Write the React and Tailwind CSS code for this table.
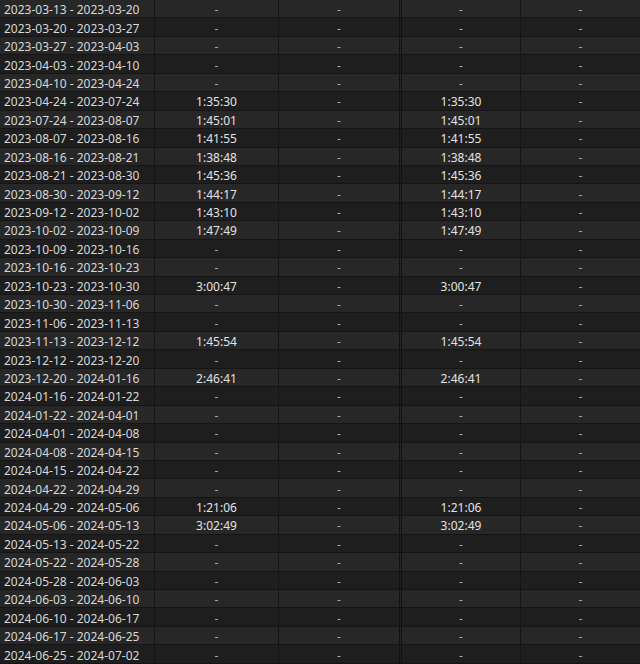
import React from 'react'

const rows = [
  ['2023-03-13 - 2023-03-20'],
  ['2023-03-20 - 2023-03-27'],
  ['2023-03-27 - 2023-04-03'],
  ['2023-04-03 - 2023-04-10'],
  ['2023-04-10 - 2023-04-24'],
  ['2023-04-24 - 2023-07-24', '1:35:30'],
  ['2023-07-24 - 2023-08-07', '1:45:01'],
  ['2023-08-07 - 2023-08-16', '1:41:55'],
  ['2023-08-16 - 2023-08-21', '1:38:48'],
  ['2023-08-21 - 2023-08-30', '1:45:36'],
  ['2023-08-30 - 2023-09-12', '1:44:17'],
  ['2023-09-12 - 2023-10-02', '1:43:10'],
  ['2023-10-02 - 2023-10-09', '1:47:49'],
  ['2023-10-09 - 2023-10-16'],
  ['2023-10-16 - 2023-10-23'],
  ['2023-10-23 - 2023-10-30', '3:00:47'],
  ['2023-10-30 - 2023-11-06'],
  ['2023-11-06 - 2023-11-13'],
  ['2023-11-13 - 2023-12-12', '1:45:54'],
  ['2023-12-12 - 2023-12-20'],
  ['2023-12-20 - 2024-01-16', '2:46:41'],
  ['2024-01-16 - 2024-01-22'],
  ['2024-01-22 - 2024-04-01'],
  ['2024-04-01 - 2024-04-08'],
  ['2024-04-08 - 2024-04-15'],
  ['2024-04-15 - 2024-04-22'],
  ['2024-04-22 - 2024-04-29'],
  ['2024-04-29 - 2024-05-06', '1:21:06'],
  ['2024-05-06 - 2024-05-13', '3:02:49'],
  ['2024-05-13 - 2024-05-22'],
  ['2024-05-22 - 2024-05-28'],
  ['2024-05-28 - 2024-06-03'],
  ['2024-06-03 - 2024-06-10'],
  ['2024-06-10 - 2024-06-17'],
  ['2024-06-17 - 2024-06-25'],
  ['2024-06-25 - 2024-07-02'],
]

function Value({ v }) {
  if (!v) return <span className="text-[#a8a8a8]">-</span>
  return <span className="text-[#e2e2e2]">{v}</span>
}

export default function App() {
  return (
    <div
      className="w-[640px] h-[664px] overflow-hidden bg-[#1f1f1f] text-[12px] leading-none"
      style={{ fontFamily: '"Noto Sans", "Open Sans", sans-serif' }}
    >
      {rows.map(([range, time], i) => (
        <div
          key={range}
          className={`flex h-[18.44px] border-b border-[#151515] ${i % 2 === 0 ? 'bg-[#272727]' : 'bg-[#1e1e1e]'}`}
        >
          <div className="w-[155px] shrink-0 flex items-center pl-[4px] pt-[3px] border-r border-[#151515] text-[#d8d8d8]">
            {range}
          </div>
          <div className="w-[124px] shrink-0 flex items-center justify-center pt-[3px] border-r border-[#151515]">
            <Value v={time} />
          </div>
          <div className="w-[123px] shrink-0 flex items-center justify-center pt-[3px] border-r-[3px] border-double border-[#111]">
            <Value />
          </div>
          <div className="w-[119px] shrink-0 flex items-center justify-center pt-[3px] border-r border-[#151515]">
            <Value v={time} />
          </div>
          <div className="flex-1 flex items-center justify-center pt-[3px]">
            <Value />
          </div>
        </div>
      ))}
    </div>
  )
}
